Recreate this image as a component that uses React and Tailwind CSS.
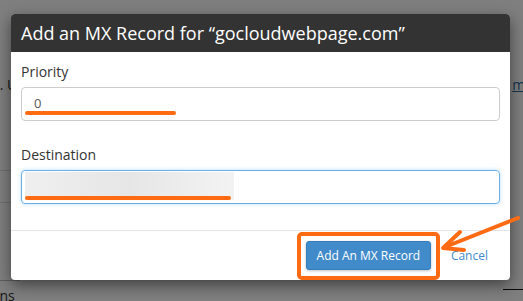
export default function App() {
  return (
    <div className="relative w-[523px] h-[301px] overflow-hidden bg-white font-['Open_Sans',sans-serif] text-[#333]">
      {/* page behind the overlay */}
      <div className="flex flex-col text-[14px]">
        <div className="mt-[74px] flex h-[20px] items-center justify-between">
          <span className="-ml-[7px]">s. U</span>
          <span className="-mr-[10px] text-[#2a6496] underline">me</span>
        </div>
        <div className="mt-[76px] h-[33px] w-[20px] border-y border-[#ddd]" />
        <div className="mt-[77px] flex items-start justify-between">
          <div className="flex flex-col">
            <div className="h-px w-[20px] bg-[#bbb]" />
            <span className="-ml-[9px] mt-[5px] leading-[20px]">ons</span>
          </div>
          <div className="mt-[9px] h-px w-[20px] bg-[#111]" />
        </div>
      </div>

      {/* overlay */}
      <div className="absolute inset-0 bg-black/50" />

      {/* modal */}
      <div className="absolute left-[11px] top-[14px] flex w-[499px] flex-col rounded-[4px] bg-white shadow-[0_5px_15px_rgba(0,0,0,0.5)]">
        <div className="flex h-[38px] items-center rounded-t-[4px] bg-[#333] px-[10px] text-[18px] text-white">
          Add an MX Record for “gocloudwebpage.com”
        </div>
        <div className="flex flex-col px-[10px] pt-[10px] pb-[26px]">
          <label className="mb-[5px] text-[14px] leading-[20px] text-[#333]">Priority</label>
          <div className="relative flex h-[34px] items-center rounded-[4px] border border-[#ccc] pl-[12px] text-[13px] text-[#555]">
            0
            <div className="absolute left-[3px] top-[23px] h-[4px] w-[151px] rounded-full bg-[#ff6b12]" />
          </div>
          <label className="mt-[24px] mb-[5px] text-[14px] leading-[20px] text-[#333]">Destination</label>
          <div className="relative h-[34px] rounded-[4px] border border-[#66afe9] shadow-[0_0_4px_rgba(102,175,233,0.4)]">
            <div className="absolute left-[3px] top-[1px] h-[28px] w-[209px] bg-gradient-to-r from-[#efefef] via-[#e6e6e6] to-[#f3f3f3]" />
            <div className="absolute left-[3px] top-[25px] h-[4px] w-[206px] rounded-full bg-[#ff6b12]" />
          </div>
        </div>
        <div className="flex h-[50px] items-center justify-end border-t border-[#e5e5e5] pt-[1px] pr-[22px]">
          <div className="rounded-[5px] border-4 border-[#ff6b12] p-[5px] pb-[6px]">
            <button className="h-[29px] w-[125px] rounded-[3px] border border-[#357ebd] bg-[#428bca] text-[12px] text-white shadow-[0_1px_3px_rgba(0,0,0,0.25)]">
              Add An MX Record
            </button>
          </div>
          <span className="ml-[11px] text-[12px] text-[#428bca]">Cancel</span>
        </div>
      </div>

      {/* annotation arrow */}
      <svg className="pointer-events-none absolute inset-0" width="523" height="301" viewBox="0 0 523 301">
        <path d="M518 218 L445 247" stroke="#ff6b12" strokeWidth="4" strokeLinecap="round" fill="none" />
        <path d="M460 232 L443 248 L464 250" stroke="#ff6b12" strokeWidth="4" strokeLinecap="round" strokeLinejoin="round" fill="none" />
      </svg>
    </div>
  );
}
